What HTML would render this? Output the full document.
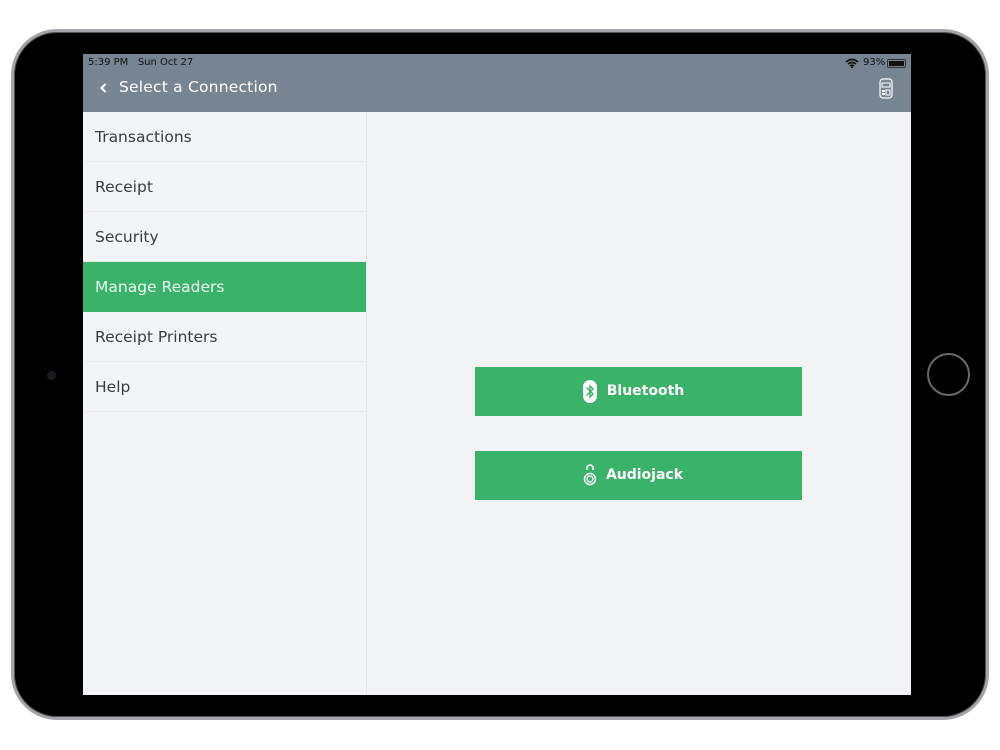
<!DOCTYPE html>
<html><head><meta charset="utf-8"><style>
*{margin:0;padding:0;box-sizing:border-box}
body{width:1000px;height:750px;background:#fff;position:relative;overflow:hidden;font-family:"DejaVu Sans","Liberation Sans",sans-serif}
.frame{position:absolute;left:11px;top:29px;width:978px;height:691px;border-radius:46px;background:#000;border:3px solid #a4a6aa;box-shadow:inset 0 0 0 1px #555}
.screen{position:absolute;left:83px;top:54px;width:828px;height:641px;background:#f2f3f5;overflow:hidden}
.hdr{position:absolute;left:0;top:0;width:828px;height:58px;background:#778491;color:#fff}
.status{position:absolute;top:3px;font-size:10px;color:#111}
.title{position:absolute;left:36px;top:24px;font-size:15.5px;color:#fff;letter-spacing:0.2px}
.side{position:absolute;left:0;top:58px;width:284px;height:583px;background:#f3f4f6;border-right:1px solid #e4e6e8}
.row{height:50px;border-bottom:1px solid #e8e9eb;padding-left:12px;line-height:50px;font-size:15.5px;color:#3a3d40}
.row.act{background:#3bb26a;color:#eafff0;border-bottom:none}
.btn{position:absolute;left:392px;width:327px;height:49px;background:#3bb26a;color:#fff;font-weight:bold;font-size:14px;line-height:49px;text-align:center}
</style></head><body>
<div class="frame"></div>
<div style="position:absolute;left:47px;top:371px;width:9px;height:9px;border-radius:50%;background:#1a1c22"></div>
<div style="position:absolute;left:927px;top:353px;width:43px;height:43px;border-radius:50%;border:2px solid #6a6a6a"></div>
<div class="screen">
<div class="hdr">
<div class="status" style="left:5px">5:39 PM&nbsp;&nbsp;&nbsp;Sun Oct 27</div>
<svg style="position:absolute;left:762px;top:4px" width="14" height="10" viewBox="0 0 14 10"><path d="M1 4Q7 -1 13 4M3 6Q7 3 11 6M5 8Q7 6.5 9 8" stroke="#111" stroke-width="1.6" fill="none"/><circle cx="7" cy="9.2" r="1" fill="#111"/></svg>
<div class="status" style="left:780px">93%</div>
<div style="position:absolute;left:804px;top:5px;width:19px;height:9px;border:1px solid #333;border-radius:2px;padding:1px"><div style="width:15px;height:5px;background:#111"></div></div>
<svg style="position:absolute;left:17px;top:29px" width="7" height="10" viewBox="0 0 7 10"><path d="M5.5 1L1.5 5L5.5 9" stroke="#fff" stroke-width="2" fill="none"/></svg>
<div class="title" style="left:36px">Select a Connection</div>
<svg style="position:absolute;left:796px;top:24px" width="14" height="21" viewBox="0 0 14 21"><rect x="1" y="1" width="12" height="19" rx="3" stroke="#fff" fill="none" stroke-width="1.2"/><rect x="3" y="5" width="8" height="4" stroke="#fff" fill="none"/><rect x="3" y="12" width="3" height="2" fill="#fff"/><rect x="7" y="12" width="4" height="5" stroke="#fff" fill="none"/><rect x="3" y="15" width="3" height="2" fill="#fff"/></svg>
</div>
<div class="side">
<div class="row">Transactions</div>
<div class="row">Receipt</div>
<div class="row">Security</div>
<div class="row act">Manage Readers</div>
<div class="row">Receipt Printers</div>
<div class="row">Help</div>
</div>
<div class="btn" style="top:313px"><svg style="position:absolute;left:108px;top:13px" width="14" height="23" viewBox="0 0 14 23"><rect x="0" y="0" width="14" height="23" rx="7" fill="#fff"/><path d="M3.5 7.5L10 14L7 17V6L10 9L3.5 15.5" stroke="#3bb26a" stroke-width="1.4" fill="none"/></svg><span style="margin-left:14px">Bluetooth</span></div>
<div class="btn" style="top:397px"><svg style="position:absolute;left:108px;top:12px" width="14" height="24" viewBox="0 0 14 24"><path d="M4 7V4Q7 0 10 4V7" stroke="#fff" stroke-width="1.5" fill="none"/><circle cx="7" cy="16" r="5.5" stroke="#fff" stroke-width="1.5" fill="none"/><circle cx="7" cy="16" r="3" stroke="#fff" stroke-width="1.3" fill="none"/></svg><span style="margin-left:12px">Audiojack</span></div>
</div>
</body></html>
